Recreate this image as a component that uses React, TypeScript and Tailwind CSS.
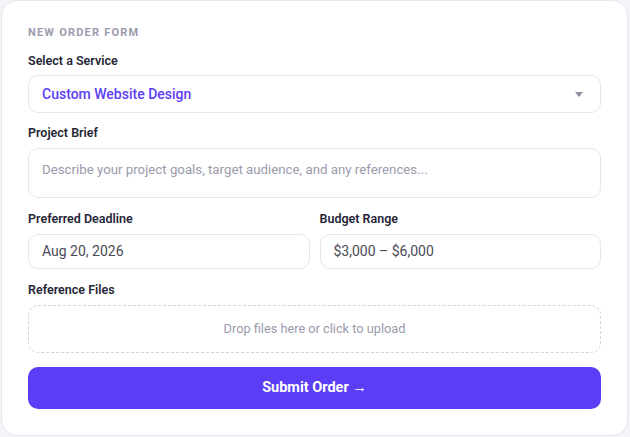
export default function App() {
  return (
    <div className="min-h-screen bg-[#f4f4f8] font-['Roboto',sans-serif]">
      <div className="ml-px w-[627px] h-[436px] rounded-2xl border border-[#e6e6ef] bg-white px-[26px] pt-[24px]">
        <p className="text-[11px] font-bold tracking-[0.11em] text-[#9c9cae] uppercase leading-4">
          New order form
        </p>

        <label className="mt-[12px] block text-[12.5px] font-semibold text-[#262636] leading-4">
          Select a Service
        </label>
        <div className="mt-[6px] flex h-[38px] items-center justify-between rounded-[10px] border border-[#e6e6ef] px-[13px]">
          <span className="text-[14px] font-medium text-[#5b3df5]">Custom Website Design</span>
          <svg width="8" height="5" viewBox="0 0 8 5" className="mr-[4px]">
            <path d="M0 0 L8 0 L4 5 Z" fill="#8f8fa6" />
          </svg>
        </div>

        <label className="mt-[12px] block text-[12.5px] font-semibold text-[#262636] leading-4">
          Project Brief
        </label>
        <div className="mt-[7px] h-[50px] rounded-[10px] border border-[#e6e6ef] px-[13px] pt-[8px]">
          <span className="text-[13.25px] text-[#9a9aab]">
            Describe your project goals, target audience, and any references...
          </span>
        </div>

        <div className="mt-[13px] grid grid-cols-2 gap-[10px]">
          <div>
            <label className="block text-[12.5px] font-semibold text-[#262636] leading-4">
              Preferred Deadline
            </label>
            <div className="mt-[7px] flex h-[35px] items-center rounded-[10px] border border-[#e6e6ef] px-[13px]">
              <span className="text-[14px] text-[#4a4a58]">Aug 20, 2026</span>
            </div>
          </div>
          <div>
            <label className="block text-[12.5px] font-semibold text-[#262636] leading-4">
              Budget Range
            </label>
            <div className="mt-[7px] flex h-[35px] items-center rounded-[10px] border border-[#e6e6ef] px-[13px]">
              <span className="text-[14px] text-[#4a4a58]">$3,000 – $6,000</span>
            </div>
          </div>
        </div>

        <label className="mt-[13px] block text-[12.5px] font-semibold text-[#262636] leading-4">
          Reference Files
        </label>
        <div className="mt-[7px] flex h-[48px] items-center justify-center rounded-[10px] border border-dashed border-[#d4d4e0]">
          <span className="text-[12.75px] text-[#9a9aab]">Drop files here or click to upload</span>
        </div>

        <button className="mt-[14px] flex h-[42px] w-full items-center justify-center rounded-[10px] bg-[#5b3df5] text-[14.5px] font-bold text-white">
          Submit Order →
        </button>
      </div>
    </div>
  );
}
